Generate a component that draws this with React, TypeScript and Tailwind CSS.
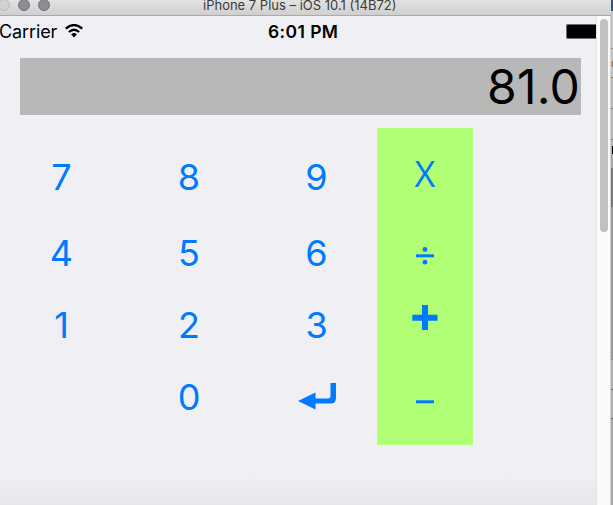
import React from "react";

function Key({ children }: { children?: React.ReactNode }) {
  return (
    <button className="flex h-[72px] w-[95px] items-center justify-center text-[36px] leading-none tracking-normal text-[#007aff]">
      {children}
    </button>
  );
}

function TitleBar() {
  return (
    <div className="flex h-[16px] w-[611px] shrink-0 border-b border-[#a9a9a9] bg-gradient-to-b from-[#e2e2e2] to-[#cfcfcf]">
      <div className="-ml-[2px] -mt-px flex w-[54px] shrink-0 gap-[8px]">
        <span className="h-3 w-3 shrink-0 rounded-full border border-[#bcbcbc] bg-[#d2d2d2]" />
        <span className="h-3 w-3 shrink-0 rounded-full border border-[#737377] bg-[#8d8c92]" />
        <span className="h-3 w-3 shrink-0 rounded-full border border-[#737377] bg-[#8d8c92]" />
      </div>
      <div className="ml-[151px] -mt-px h-3 whitespace-nowrap text-[13px] leading-[12px] text-[#3c3c3c]">
        iPhone 7 Plus – iOS 10.1 (14B72)
      </div>
    </div>
  );
}

function StatusBar() {
  return (
    <div className="flex h-[42px] text-[18px] leading-[32px] text-black">
      <div className="-ml-px flex w-[269px] shrink-0">
        <span className="w-[66px] tracking-[-0.1px]">Carrier</span>
        <svg className="mt-[8px]" width="18" height="14" viewBox="0 0 18 14" fill="none" stroke="#000">
          <path d="M.8 4.7Q9-2.7 17.2 4.7" strokeWidth="2.3" />
          <path d="M3.9 8Q9 3.5 14.1 8" strokeWidth="2.2" />
          <path d="M6.1 10.2Q9 7.8 11.9 10.2L9 13.4Z" fill="#000" stroke="none" />
        </svg>
      </div>
      <div className="w-[298px] shrink-0 whitespace-nowrap text-[17.5px] font-semibold tracking-[0.4px]">6:01 PM</div>
      <div className="mt-[8px] h-[15px] w-[30px] rounded-l-[2px] border-y border-l border-[#707074] bg-black" />
    </div>
  );
}

function Keypad() {
  return (
    <div className="mt-[13px] flex pl-[14px]">
      <div className="grid grid-cols-[95px_95px_95px] content-start gap-x-[32.5px] pt-[13px]">
        <div className="col-span-3 mb-[4px] flex gap-[32.5px]">
          <Key>7</Key>
          <Key>8</Key>
          <Key>9</Key>
        </div>
        <Key>4</Key>
        <Key>5</Key>
        <Key>6</Key>
        <Key>1</Key>
        <Key>2</Key>
        <Key>3</Key>
        <span />
        <Key>0</Key>
        <Key>
          <svg width="38" height="27" viewBox="0 0 38 27" className="-mt-px">
            <path d="M0 18L17.5 9.5V15.5H30Q32.5 15.5 32.5 13V0H38V15Q38 20.5 32.5 20.5H17.5V26.5Z" fill="#007aff" />
          </svg>
        </Key>
      </div>
      <div className="ml-[13px] flex h-[317px] w-24 flex-col items-center bg-[#b1ff74] text-[#007aff]">
        <button className="mt-[28px] h-9 font-['Open_Sans','Inter',sans-serif] text-[36px] leading-9">X</button>
        <button className="mt-[55px]">
          <svg width="18" height="18" viewBox="0 0 18 18" fill="#007aff">
            <circle cx="9" cy="2.5" r="2.4" />
            <rect y="7.3" width="18" height="3" />
            <circle cx="9" cy="15.2" r="2.4" />
          </svg>
        </button>
        <button className="mt-[40px]">
          <svg width="26" height="25" viewBox="0 0 26 25" fill="#007aff">
            <path d="M10 0h6v9.7h9.5v6H16V25h-6v-9.3H.3v-6H10z" />
          </svg>
        </button>
        <button className="mt-[70px]">
          <svg width="18" height="4" viewBox="0 0 18 4" fill="#007aff">
            <rect y=".3" width="18" height="3" />
          </svg>
        </button>
      </div>
    </div>
  );
}

export default function App() {
  return (
    <div className="flex h-[505px] w-[613px] overflow-hidden bg-[#efeff4] font-['Inter','Liberation_Sans',sans-serif]">
      <div className="flex w-[611px] shrink-0 flex-col">
        <TitleBar />
        <div className="flex h-[489px]">
          <main className="w-[596px] shrink-0 overflow-hidden bg-gradient-to-b from-[#efeff4] from-94% to-[#e7e7ea]">
            <StatusBar />
            <div className="ml-5 flex h-[57px] w-[561px] items-center justify-end bg-[#b8b8b8] pr-px text-[48px] leading-none tracking-[0.2px] text-black">
              81.0
            </div>
            <Keypad />
          </main>
          <div className="flex w-[15px] shrink-0 justify-center border-l border-[#e3e3e6] border-r border-r-[#d0d0d0] bg-[#fafafa] pt-[3px]">
            <div className="ml-px h-[213px] w-2 rounded-full bg-[#c1c1c1]" />
          </div>
        </div>
      </div>
      <div className="flex w-[2px] shrink-0 flex-col bg-[#aaa]">
        <div className="h-[11px] bg-[#305384]" />
        <div className="h-[37px] bg-[#c4c4c4]" />
        <div className="h-px bg-[#888]" />
        <div className="h-[12px] bg-[#c4c4c4]" />
        <div className="ml-px h-[6px] bg-[#9b7668]" />
        <div className="h-[10px] bg-[#c4c4c4]" />
        <div className="h-px bg-[#777]" />
        <div className="h-[30px] bg-[#bbb]" />
        <div className="h-px bg-[#777]" />
        <div className="h-[30px] bg-[#b7b7b7]" />
        <div className="h-px bg-[#777]" />
        <div className="h-[6px] bg-[#b7b7b7]" />
        <div className="ml-px h-[8px] bg-black" />
        <div className="h-[14px] bg-[#aaa]" />
        <div className="h-[39px] bg-[#777]" />
        <div className="h-[152px] bg-[#999]" />
        <div className="h-px bg-[#888]" />
        <div className="h-[29px] bg-[#b0b0b0]" />
        <div className="h-px bg-[#666]" />
        <div className="h-[28px] bg-[#b0b0b0]" />
        <div className="h-px bg-[#666]" />
      </div>
    </div>
  );
}
